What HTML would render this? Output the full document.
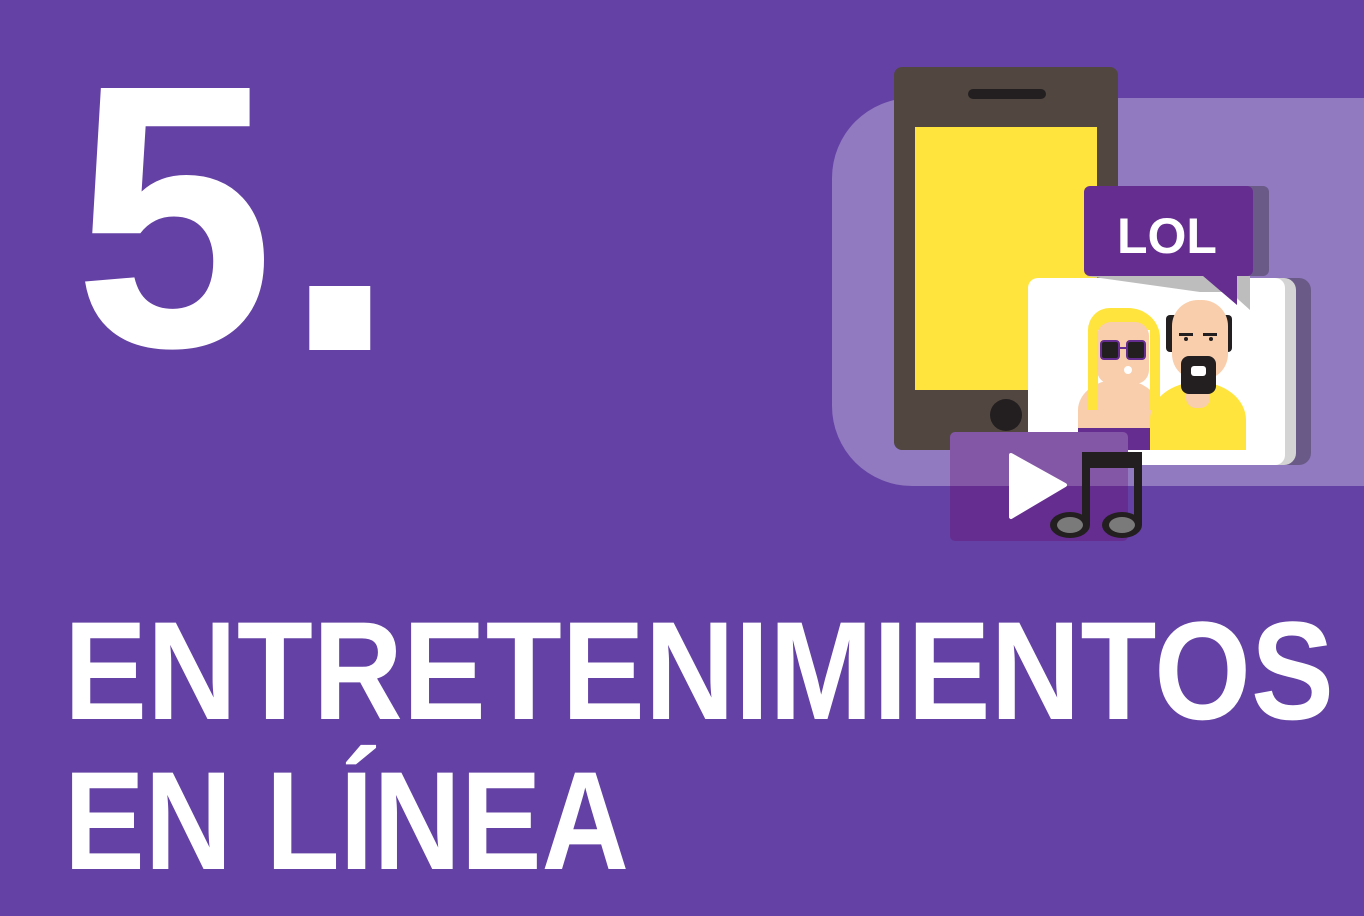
<!DOCTYPE html>
<html><head><meta charset="utf-8"><style>
html,body{margin:0;padding:0;background:#6441a4;width:1364px;height:916px;overflow:hidden}
svg{display:block}
text{font-family:"Liberation Sans",sans-serif;font-weight:bold;fill:#fff}
</style></head><body>
<svg width="1364" height="916" viewBox="0 0 1364 916">
<rect width="1364" height="916" fill="#6441a4"/>
<path d="M912 98 H1364 V486 H912 A80 80 0 0 1 832 406 V178 A80 80 0 0 1 912 98Z" fill="#917ac0"/>
<rect x="894" y="67" width="224" height="383" rx="8" fill="#524640"/>
<rect x="968" y="89" width="78" height="10" rx="5" fill="#231f20"/>
<rect x="915" y="127" width="182" height="263" fill="#ffe43d"/>
<circle cx="1006" cy="415" r="16" fill="#231f20"/>
<rect x="1050" y="278" width="261" height="187" rx="12" fill="#6a5a88"/>
<rect x="1040" y="278" width="256" height="187" rx="12" fill="#d4d4d4"/>
<rect x="1028" y="278" width="257" height="187" rx="10" fill="#fff"/>
<path d="M1078 450 V410 A40 30 0 0 1 1160 410 V450Z" fill="#f9ceac"/>
<path d="M1088 410 V330 A22 22 0 0 1 1110 308 H1128 A32 30 0 0 1 1160 338 V410 H1150 V330 H1098 V410Z" fill="#ffe43d"/>
<rect x="1097" y="322" width="52" height="62" rx="14" fill="#f9ceac"/>
<rect x="1078" y="428" width="72" height="22" fill="#662d91"/>
<rect x="1101" y="341" width="18" height="18" rx="3" fill="#231f20" stroke="#662d91" stroke-width="2"/>
<rect x="1127" y="341" width="18" height="18" rx="3" fill="#231f20" stroke="#662d91" stroke-width="2"/>
<line x1="1119" y1="348" x2="1127" y2="348" stroke="#662d91" stroke-width="2"/>
<circle cx="1128" cy="370" r="4" fill="#fff"/>
<path d="M1150 450 V420 A48 38 0 0 1 1246 420 V450Z" fill="#ffe43d"/>
<rect x="1186" y="380" width="24" height="28" rx="10" fill="#f9ceac"/>
<rect x="1166" y="315" width="66" height="37" rx="4" fill="#231f20"/>
<rect x="1172" y="300" width="56" height="80" rx="26" fill="#f9ceac"/>
<rect x="1181" y="356" width="35" height="38" rx="8" fill="#231f20"/>
<rect x="1191" y="366" width="15" height="10" rx="3" fill="#fff"/>
<rect x="1179" y="333" width="14" height="3" fill="#231f20"/><rect x="1203" y="333" width="14" height="3" fill="#231f20"/>
<circle cx="1186" cy="339" r="2" fill="#231f20"/><circle cx="1211" cy="339" r="2" fill="#231f20"/>
<rect x="1100" y="186" width="169" height="90" rx="6" fill="#6a5a88"/>
<path d="M1086 276 H1250 V310 L1230 292 H1200 Z" fill="#bdbdbd"/>
<rect x="1084" y="186" width="169" height="90" rx="6" fill="#662d91"/>
<path d="M1196 270 L1237 305 V270Z" fill="#662d91"/>
<text x="1167" y="253" font-size="50" text-anchor="middle">LOL</text>
<rect x="950" y="432" width="178" height="109" rx="5" fill="#662d91"/>
<path d="M955 432 H1123 A5 5 0 0 1 1128 437 V486 H950 V437 A5 5 0 0 1 955 432Z" fill="#8457a6"/>
<path d="M1011 455 L1065 485 L1011 517Z" fill="#fff" stroke="#fff" stroke-width="4" stroke-linejoin="round"/>
<path d="M1082 452 H1142 V525 H1134 V468 H1090 V525 H1082Z" fill="#231f20"/>
<ellipse cx="1070" cy="525" rx="20" ry="13" fill="#231f20"/>
<ellipse cx="1070" cy="525" rx="13" ry="8" fill="#7a7a7a"/>
<ellipse cx="1122" cy="525" rx="20" ry="13" fill="#231f20"/>
<ellipse cx="1122" cy="525" rx="13" ry="8" fill="#7a7a7a"/>
<text x="74" y="346" font-size="375" textLength="200" lengthAdjust="spacingAndGlyphs">5</text>
<text x="280" y="350" font-size="430" textLength="120" lengthAdjust="spacingAndGlyphs">.</text>
<text x="64" y="719" font-size="140" textLength="1270" lengthAdjust="spacingAndGlyphs">ENTRETENIMIENTOS</text>
<text x="64" y="869" font-size="140" textLength="565" lengthAdjust="spacingAndGlyphs">EN LÍNEA</text>
</svg>
</body></html>
